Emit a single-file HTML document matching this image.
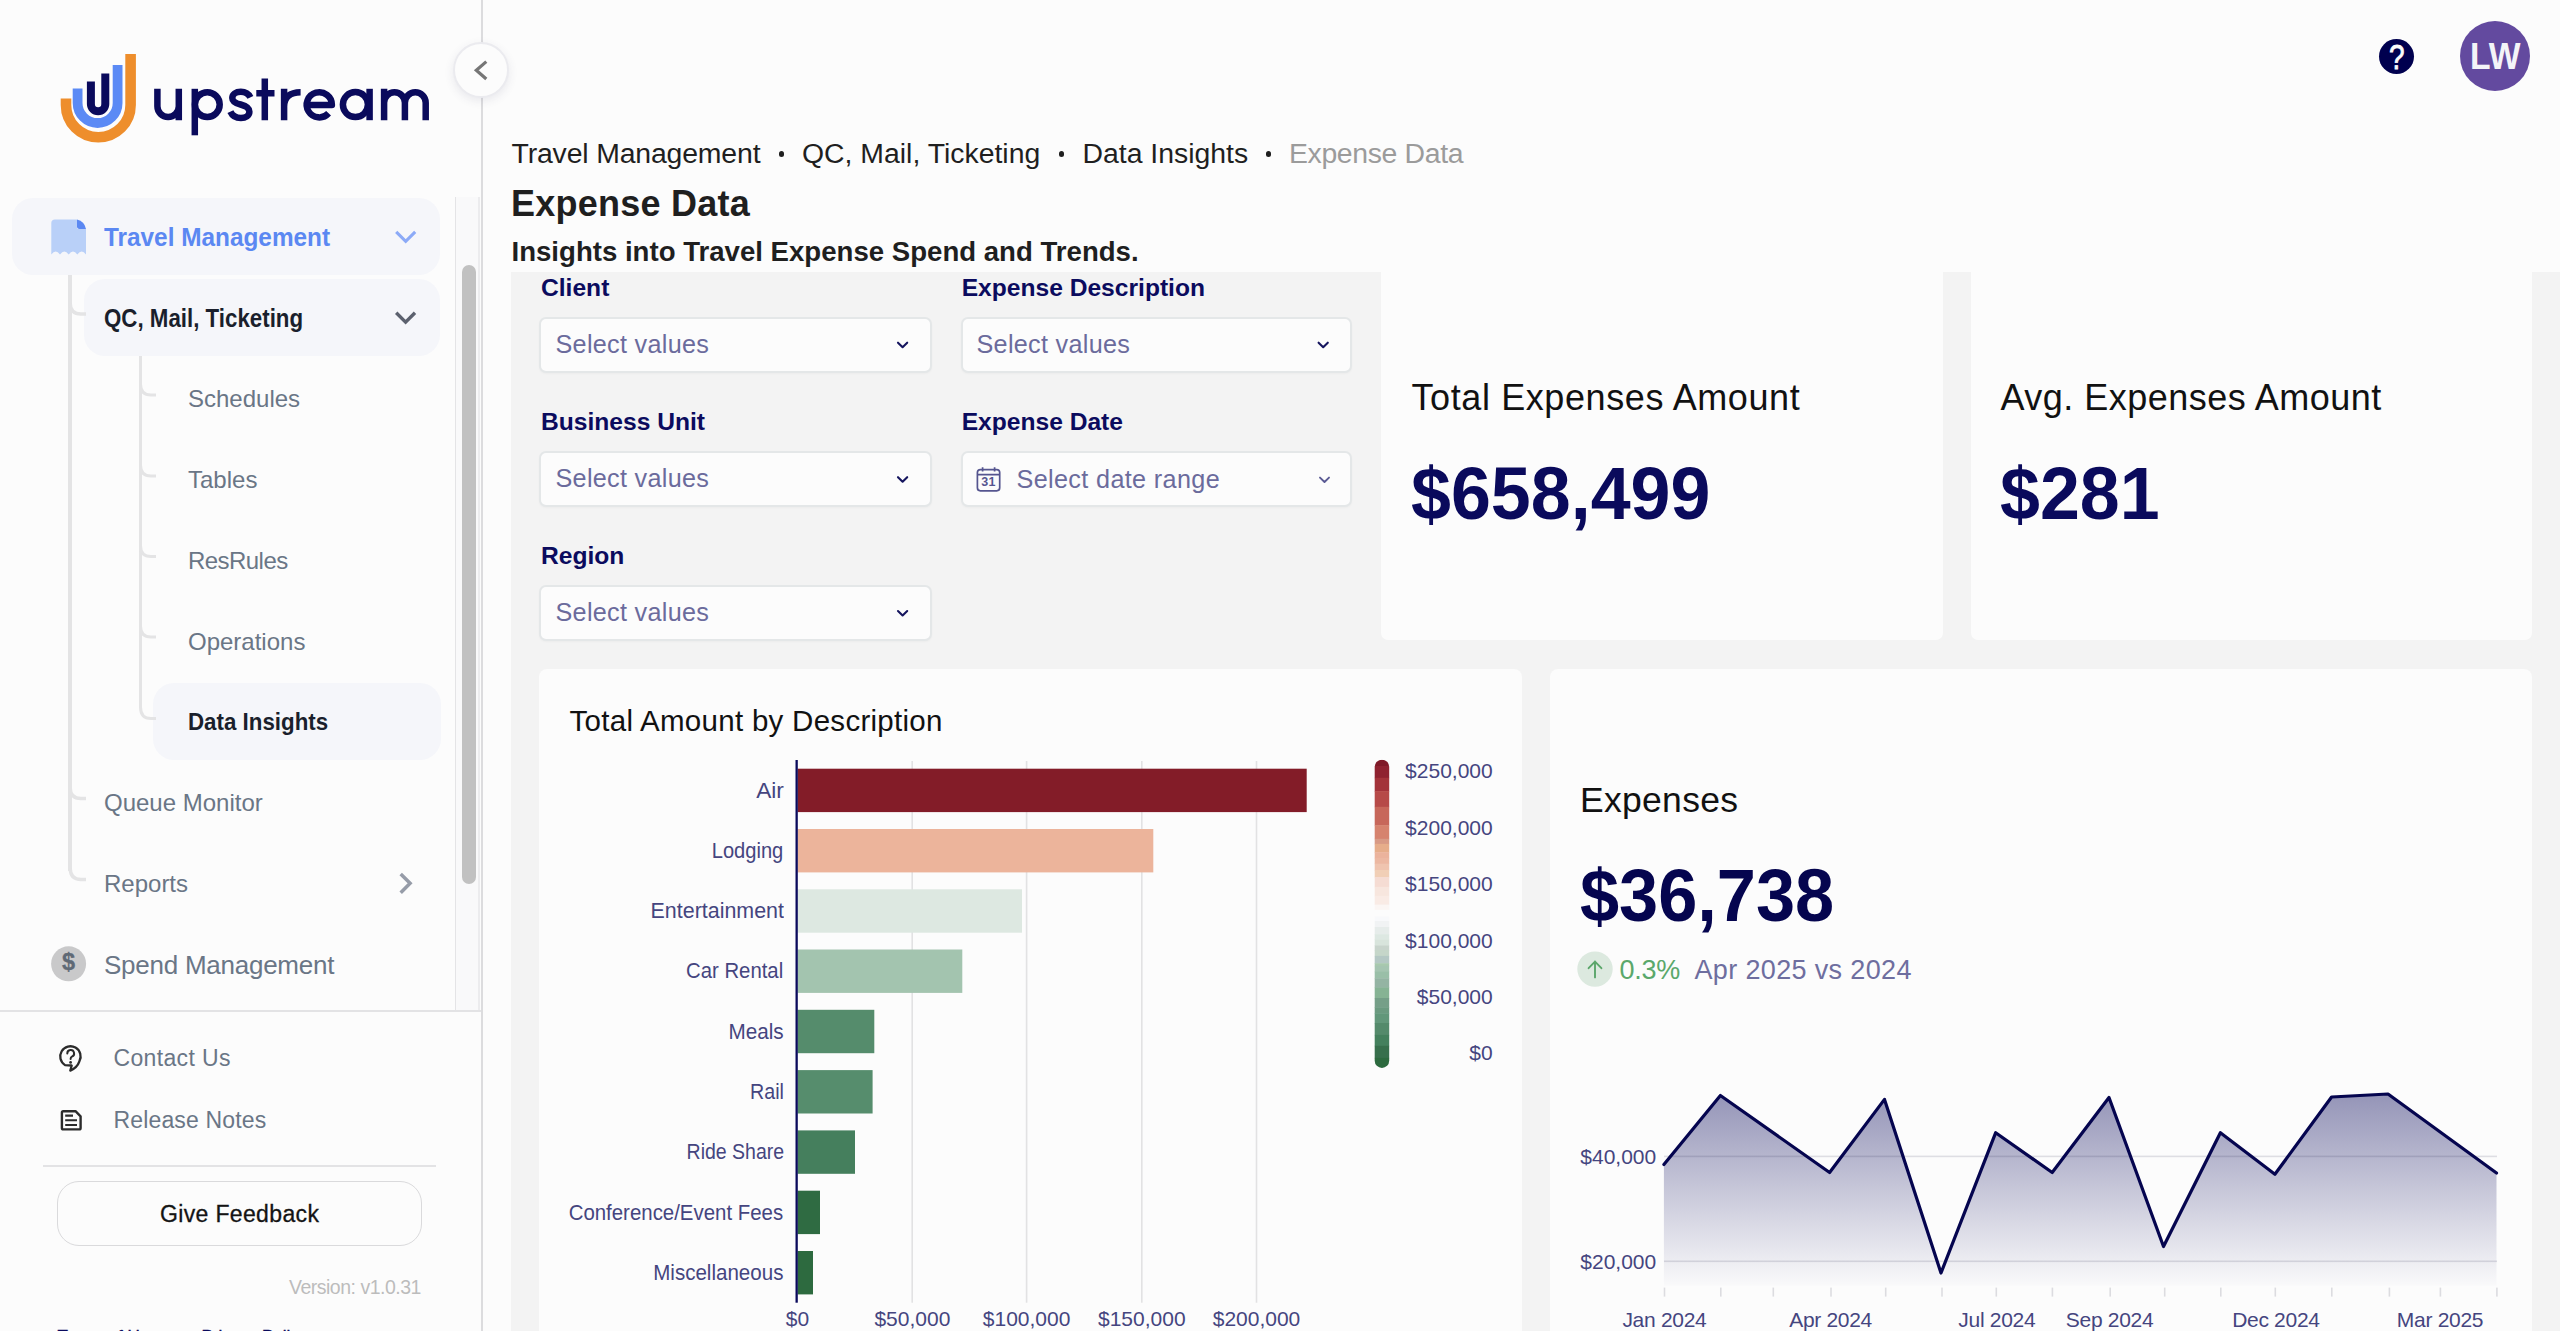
<!DOCTYPE html>
<html lang="en">
<head>
<meta charset="utf-8">
<title>Expense Data</title>
<style>
*{box-sizing:border-box;margin:0;padding:0}
html,body{width:2560px;height:1331px;overflow:hidden;background:#fcfcfc}
body{position:relative;font-family:"Liberation Sans",sans-serif;color:#111;-webkit-font-smoothing:antialiased}
.t{position:absolute;white-space:nowrap;line-height:1}
.abs{position:absolute}
.b{font-weight:bold}
/* sidebar */
#sidebar{position:absolute;left:0;top:0;width:483px;height:1331px;background:#fcfcfc;border-right:2px solid #dcdcde}
.pill{position:absolute;background:#f5f6fa;border-radius:21px}
.nav{color:#6a7686}
.navdark{color:#1a1f2c}
.tree{position:absolute;background:#e4e4e5}
/* main */
#panel{position:absolute;left:511px;top:272px;width:2049px;height:1059px;background:#f3f3f3}
.card{position:absolute;background:#fcfcfc}
.lbl{color:#0b0b5e;font-weight:bold;font-size:24.6px;letter-spacing:0}
.sel{position:absolute;height:56px;background:#fcfcfc;border:2px solid #e4e7e8;border-radius:7px;box-shadow:0 1px 2px rgba(0,0,0,.03)}
.ph{color:#6b6b9c;font-size:25.2px;letter-spacing:.3px}
.ax{color:#45457f;font-size:21px}
.bl{font-size:22px;transform-origin:100% 50%}
.axc{transform:translateX(-50%)}
.bc{top:138.9px;font-size:28.4px;color:#1f1f1f}
.bdot{top:151.3px;width:5.5px;height:5.5px;border-radius:50%;background:#1f1f1f}
</style>
</head>
<body>
<!-- SIDEBAR -->
<div id="sidebar">
<!-- logo -->
<svg id="logo" class="abs" style="left:50px;top:44px" width="100" height="110" viewBox="50 44 100 110" fill="none" stroke-linecap="butt">
  <path d="M66 98.5 V105 A32.3 32.3 0 0 0 130.6 105 V54" stroke="#ee8e2c" stroke-width="10.6"/>
  <path d="M77.6 88.5 V103 A20 20 0 0 0 117.6 103 V65" stroke="#5b8af5" stroke-width="9.8"/>
  <path d="M90.9 81.5 V104 A7.2 7.2 0 0 0 105.3 104 V73.5" stroke="#0a0a5c" stroke-width="8"/>
</svg>
<svg id="logotext" class="abs" style="left:145px;top:65px" width="300" height="80" viewBox="145 65 300 80" fill="none" stroke="#0a0a5c" stroke-width="6.5" stroke-linecap="butt" stroke-linejoin="round">
  <path d="M157.4 88.8 V106.3 A10.7 10.7 0 0 0 178.8 106.3 M178.8 88.8 V120.2"/>
  <path d="M194.8 88.8 V135.3"/><circle cx="207.3" cy="104.6" r="12.4"/>
  <path d="M250.4 97.4 C248.6 93.6 245 91.7 240.8 91.7 C235.6 91.7 232.3 94.4 232.3 97.9 C232.3 101.6 235.2 103.1 240.6 104.5 C246.6 106.1 249.4 107.9 249.4 111.7 C249.4 115.5 245.6 118 240.9 118 C236 118 232.3 115.8 230.4 111.6" stroke-linecap="butt"/>
  <path d="M264.8 78.5 V120.2 M256.3 93.2 H274.5"/>
  <path d="M284.1 88.8 V120.2 M284.1 106.5 C284.1 97.6 289.6 92.2 300.6 92.2"/>
  <path d="M306.7 104.9 H331.9 A12.6 12.6 0 1 0 328.6 113.3"/>
  <circle cx="355.4" cy="104.6" r="12.5"/><path d="M369.6 88.8 V120.2"/>
  <path d="M384.1 88.8 V120.2 M384.1 102.7 A10.4 10.4 0 0 1 404.9 102.7 V120.2 M404.9 102.7 A10.4 10.4 0 0 1 425.7 102.7 V120.2"/>
</svg>

<!-- scrollbar -->
<div class="abs" style="left:455px;top:197px;width:25px;height:813px;background:#f9f9fa;border-left:1.5px solid #e4e4e6;border-right:2px solid #ececee"></div>
<div id="thumb" class="abs" style="left:461.8px;top:265px;width:14px;height:619px;background:#c1c1c1;border-radius:7px"></div>

<!-- tree lines -->
<div class="tree" style="left:68.3px;top:275px;width:4px;height:596px"></div>
<div class="tree" style="left:139px;top:356px;width:3px;height:352px"></div>

<!-- pills -->
<div id="pill1" class="pill" style="left:12px;top:198.3px;width:428.4px;height:76.8px"></div>
<div id="pill2" class="pill" style="left:83.5px;top:279.4px;width:356.9px;height:76.6px"></div>
<div id="pill3" class="pill" style="left:153px;top:683.4px;width:287.5px;height:76.8px"></div>

<div id="tm" class="t b" style="left:104px;top:224px;font-size:26px;color:#5b88f2;transform-origin:0 0;transform:scaleX(.937)">Travel Management</div>
<div id="qc" class="t b navdark" style="left:104px;top:305.5px;font-size:25px;transform-origin:0 0;transform:scaleX(.892)">QC, Mail, Ticketing</div>
<div id="n1" class="t nav" style="left:188px;top:386.7px;font-size:24px">Schedules</div>
<div id="n2" class="t nav" style="left:188px;top:467.6px;font-size:24px">Tables</div>
<div id="n3" class="t nav" style="left:188px;top:548.5px;font-size:24px;letter-spacing:-.55px">ResRules</div>
<div id="n4" class="t nav" style="left:188px;top:629.7px;font-size:24px">Operations</div>
<div id="n5" class="t b navdark" style="left:188px;top:710px;font-size:24px;transform-origin:0 0;transform:scaleX(.93)">Data Insights</div>
<div id="n6" class="t nav" style="left:104px;top:790.5px;font-size:24px">Queue Monitor</div>
<div id="n7" class="t nav" style="left:104px;top:871.5px;font-size:24px">Reports</div>
<div id="n8" class="t nav" style="left:104px;top:952px;font-size:26px;letter-spacing:-.25px">Spend Management</div>

<!-- footer -->
<div class="abs" style="left:0;top:1010px;width:481px;height:2px;background:#e3e3e5"></div>
<div id="cu" class="t nav" style="left:113.5px;top:1046.5px;font-size:23px;letter-spacing:.35px">Contact Us</div>
<div id="rn" class="t nav" style="left:113.5px;top:1108.5px;font-size:23px;letter-spacing:.15px">Release Notes</div>
<div class="abs" style="left:43px;top:1165px;width:393px;height:2px;background:#e3e3e5"></div>
<div id="gf" class="abs" style="left:57px;top:1181px;width:365px;height:65px;border:1.5px solid #dadadc;border-radius:22px;background:#fcfcfc"></div>
<div id="gft" class="t" style="left:160px;top:1202.5px;font-size:23px;letter-spacing:.35px;color:#141414;-webkit-text-stroke:.3px #141414">Give Feedback</div>
<div id="ver" class="t" style="left:289px;top:1278px;font-size:19.5px;letter-spacing:-.5px;color:#bcbcbc">Version: v1.0.31</div>
<div id="terms" class="t" style="left:57.5px;top:1327.6px;font-size:17px;color:#0a0a5c;-webkit-text-stroke:.4px #0a0a5c">Terms of Use</div><div class="t" style="left:201.5px;top:1327.6px;font-size:17px;color:#0a0a5c;-webkit-text-stroke:.4px #0a0a5c">Privacy Policy</div>
</div>

<!-- sidebar icons -->
<svg class="abs" style="left:0;top:0;pointer-events:none" width="520" height="1331" viewBox="0 0 520 1331" fill="none">
  <!-- tree elbows level 1 -->
  <g stroke="#e4e4e5" stroke-width="3.4" fill="none">
    <path d="M70.2 303 Q70.2 314 81 314 H86"/>
    <path d="M70.2 787.5 Q70.2 798.5 81 798.5 H86"/>
    <path d="M70.2 868 Q70.2 879.5 81 879.5 H86"/>
  </g>
  <g stroke="#e4e4e5" stroke-width="3" fill="none">
    <path d="M140.5 384 Q140.5 395 151 395 H156"/>
    <path d="M140.5 465 Q140.5 476 151 476 H156"/>
    <path d="M140.5 545.5 Q140.5 556.5 151 556.5 H156"/>
    <path d="M140.5 626 Q140.5 637 151 637 H156"/>
    <path d="M140.5 707 Q140.5 718.5 151 718.5 H156"/>
  </g>
  <!-- receipt icon -->
  <path d="M55 219.5 H77 V229 H86 V254.5 Q83.8 251.6 81.7 251.6 Q79.5 251.6 77.3 254.5 Q75.2 251.6 73 251.6 Q70.8 251.6 68.7 254.5 Q66.5 251.6 64.3 251.6 Q62.2 251.6 60 254.5 Q57.8 251.6 55.7 251.6 Q53.5 251.6 51.3 254.5 V223 Q51.3 219.5 55 219.5 Z" fill="#b9d0f8"/>
  <path d="M77 219.5 Q84.5 221 86 229 H79.5 Q77 229 77 226.5 Z" fill="#5b88f2"/>
  <!-- chevrons -->
  <path d="M396.2 231.9 L405.7 241.4 L415.2 231.9" stroke="#8caaf7" stroke-width="3.1"/>
  <path d="M396.2 312.7 L405.6 322.1 L415 312.7" stroke="#5c616e" stroke-width="3.4"/>
  <path d="M400.7 873.9 L410.1 883.3 L400.7 892.7" stroke="#969ca8" stroke-width="3.5"/>
  <!-- spend $ -->
  <circle cx="68.6" cy="963.8" r="17.5" fill="#c9c9ca"/>
  <!-- contact icon -->
  <g stroke="#2b2b2b" stroke-width="2.3" stroke-linejoin="round" stroke-linecap="round">
    <path d="M65 1065.1 A10.2 10.2 0 1 1 79.4 1061.3 Q77.2 1067.6 70.3 1070.6 L71.7 1065.5 Z" fill="none"/>
    <path d="M67.3 1053.4 A3.4 3.4 0 1 1 71.9 1056.6 Q70.6 1057.2 70.6 1059" stroke-width="2"/>
  </g>
  <circle cx="70.6" cy="1062.4" r="1.4" fill="#2b2b2b"/>
  <!-- release notes icon -->
  <g stroke="#2b2b2b" stroke-width="2.4" stroke-linejoin="round" fill="none">
    <path d="M63.2 1111.2 H75.5 L80.6 1116.3 V1128 Q80.6 1129.4 79.2 1129.4 H63.2 Q61.9 1129.4 61.9 1128 V1112.5 Q61.9 1111.2 63.2 1111.2 Z"/>
    <path d="M65.2 1115.6 H73 M65.2 1120.3 H77 M65.2 1125 H77" stroke-width="2.1"/>
  </g>
</svg>
<div id="dol" class="t b" style="left:62.1px;top:951px;font-size:23.5px;color:#5f6975;-webkit-text-stroke:.3px #5f6975">$</div>
<!-- collapse button -->
<div id="collapse" class="abs" style="left:453px;top:42px;width:56px;height:56px;border-radius:50%;background:#fcfcfc;border:2px solid #ebebef;box-shadow:0 3px 10px rgba(60,60,100,.10)"></div>
<svg class="abs" style="left:466px;top:56px" width="30" height="30" viewBox="466 56 30 30" fill="none"><path d="M486.3 61.6 L476.3 70.3 L486.3 79" stroke="#767676" stroke-width="3.2"/></svg>
<!-- MAIN -->
<!-- top-right icons -->
<div id="help" class="abs" style="left:2379.1px;top:38.8px;width:35px;height:35px;border-radius:50%;background:#00004f"></div>
<div id="helpq" class="t" style="left:2387px;top:39.4px;font-size:35px;color:#fcfcfc;-webkit-text-stroke:.8px #fcfcfc;transform:scaleX(.8)">?</div>
<div id="avatar" class="abs" style="left:2460px;top:21.1px;width:70px;height:70px;border-radius:50%;background:#634a9f"></div>
<div id="avt" class="t b" style="left:2470.3px;top:38.5px;font-size:36px;color:#f4f4f8;transform-origin:0 0;transform:scaleX(.935)">LW</div>

<!-- breadcrumb -->
<div id="bc1" class="t bc" style="left:511.5px;letter-spacing:-.15px">Travel Management</div>
<div id="bc2" class="t bc" style="left:802px">QC, Mail, Ticketing</div>
<div id="bc3" class="t bc" style="left:1082.5px">Data Insights</div>
<div id="bc4" class="t bc" style="left:1289px;color:#9b9b9b;letter-spacing:-.35px">Expense Data</div>
<div class="abs bdot" style="left:778.5px"></div><div class="abs bdot" style="left:1058.5px"></div><div class="abs bdot" style="left:1265.5px"></div>
<div id="h1" class="t b" style="left:511px;top:185.5px;font-size:36px;color:#1f1f1f;letter-spacing:.25px">Expense Data</div>
<div id="h2" class="t b" style="left:511.5px;top:237.8px;font-size:27.6px;color:#1f1f1f">Insights into Travel Expense Spend and Trends.</div>

<div id="panel"></div>

<!-- filters -->
<div id="l1" class="t lbl" style="left:541px;top:275.8px">Client</div>
<div id="l2" class="t lbl" style="left:961.7px;top:275.8px">Expense Description</div>
<div id="l3" class="t lbl" style="left:541px;top:410.2px">Business Unit</div>
<div id="l4" class="t lbl" style="left:961.7px;top:410.2px">Expense Date</div>
<div id="l5" class="t lbl" style="left:541px;top:544.3px">Region</div>

<div id="s1" class="sel" style="left:539px;top:317px;width:393px"></div>
<div id="s2" class="sel" style="left:961px;top:317px;width:391px"></div>
<div id="s3" class="sel" style="left:539px;top:451px;width:393px"></div>
<div id="s4" class="sel" style="left:961px;top:451px;width:391px"></div>
<div id="s5" class="sel" style="left:539px;top:585px;width:393px"></div>

<div id="p1" class="t ph" style="left:555.5px;top:331.5px">Select values</div>
<div id="p2" class="t ph" style="left:976.5px;top:331.5px">Select values</div>
<div id="p3" class="t ph" style="left:555.5px;top:465.9px">Select values</div>
<div id="p4" class="t ph" style="left:1016.5px;top:466.7px;letter-spacing:.36px">Select date range</div>
<div id="p5" class="t ph" style="left:555.5px;top:599.6px">Select values</div>

<svg class="abs" style="left:511px;top:272px;pointer-events:none" width="900" height="400" viewBox="511 272 900 400" fill="none">
  <g stroke="#15155e" stroke-width="2.1" stroke-linecap="round" stroke-linejoin="round">
    <path d="M898 342.7 L902.6 347.2 L907.2 342.7"/>
    <path d="M1318.6 342.7 L1323.2 347.2 L1327.8 342.7"/>
    <path d="M898 477.2 L902.6 481.7 L907.2 477.2"/>
    <path d="M898 611 L902.6 615.5 L907.2 611"/>
  </g>
  <path d="M1320 477.6 L1324.5 482 L1329 477.6" stroke="#5a5a94" stroke-width="1.9" stroke-linecap="round" stroke-linejoin="round"/>
  <!-- calendar icon -->
  <g stroke="#55558f" stroke-width="1.7" fill="none" stroke-linejoin="round">
    <rect x="977.4" y="469.6" width="22.3" height="21.2" rx="3"/>
    <path d="M977.4 474.6 H999.7 M982.6 467.2 V471.6 M994.6 467.2 V471.6"/>
  </g>
</svg>
<div id="cal31" class="t b" style="left:981.2px;top:476.3px;font-size:12.5px;color:#55558f;letter-spacing:.3px">31</div>

<!-- KPI cards -->
<div id="k1" class="card" style="left:1381px;top:272px;width:562px;height:368px;border-radius:0 0 7px 7px"></div>
<div id="k2" class="card" style="left:1971px;top:272px;width:561px;height:368px;border-radius:0 0 7px 7px"></div>
<div id="k1t" class="t" style="left:1411.5px;top:380px;font-size:36px;color:#111;letter-spacing:.6px">Total Expenses Amount</div>
<div id="k1v" class="t b" style="left:1411px;top:456.5px;font-size:74px;color:#0a0a5c;transform-origin:0 0;transform:scaleX(.97)">$658,499</div>
<div id="k2t" class="t" style="left:2000.5px;top:380px;font-size:36px;color:#111;letter-spacing:.48px">Avg. Expenses Amount</div>
<div id="k2v" class="t b" style="left:2000px;top:456.5px;font-size:74px;color:#0a0a5c;transform-origin:0 0;transform:scaleX(.97)">$281</div>

<!-- chart cards -->
<div id="c1" class="card" style="left:539px;top:669px;width:983px;height:700px;border-radius:8px"></div>
<div id="c2" class="card" style="left:1549.5px;top:669px;width:982.5px;height:700px;border-radius:8px"></div>
<svg class="abs" style="left:539px;top:669px;pointer-events:none" width="2021" height="662" viewBox="539 669 2021 662" fill="none">
<defs>
<linearGradient id="lg" x1="0" y1="0" x2="0" y2="1"><stop offset="0" stop-color="#8a1f2c"/><stop offset="0.06" stop-color="#a3343b"/><stop offset="0.1" stop-color="#b84c49"/><stop offset="0.16" stop-color="#c9604f"/><stop offset="0.22" stop-color="#d47a5e"/><stop offset="0.27" stop-color="#df9d7b"/><stop offset="0.32" stop-color="#ecb39b"/><stop offset="0.37" stop-color="#f0c8af"/><stop offset="0.42" stop-color="#f6ddd3"/><stop offset="0.46" stop-color="#f9eeea"/><stop offset="0.49" stop-color="#fbfbfb"/><stop offset="0.53" stop-color="#eef2ef"/><stop offset="0.58" stop-color="#d8e4dc"/><stop offset="0.63" stop-color="#b9ccc1"/><stop offset="0.68" stop-color="#a5c3b0"/><stop offset="0.74" stop-color="#8fb39c"/><stop offset="0.78" stop-color="#7aa88a"/><stop offset="0.83" stop-color="#659878"/><stop offset="0.88" stop-color="#558c6c"/><stop offset="0.93" stop-color="#44805c"/><stop offset="0.97" stop-color="#336f48"/><stop offset="1" stop-color="#2c693e"/></linearGradient>
<linearGradient id="ag" gradientUnits="userSpaceOnUse" x1="0" y1="1093" x2="0" y2="1286"><stop offset="0" stop-color="#0a0a5c" stop-opacity=".43"/><stop offset="1" stop-color="#0a0a5c" stop-opacity=".01"/></linearGradient>
</defs>
<rect x="911.4000000000001" y="761" width="1.6" height="541.7" fill="#e2e2e3"/>
<rect x="1025.8" y="761" width="1.6" height="541.7" fill="#e2e2e3"/>
<rect x="1141.0" y="761" width="1.6" height="541.7" fill="#e2e2e3"/>
<rect x="1255.7" y="761" width="1.6" height="541.7" fill="#e2e2e3"/>
<rect x="797.6" y="768.7" width="509.1" height="43.4" fill="#831c28"/>
<rect x="797.6" y="829.0" width="355.7" height="43.4" fill="#ecb49b"/>
<rect x="797.6" y="889.3" width="224.4" height="43.4" fill="#dde8e1"/>
<rect x="797.6" y="949.5" width="164.7" height="43.4" fill="#a3c4af"/>
<rect x="797.6" y="1009.8" width="76.7" height="43.4" fill="#558c6c"/>
<rect x="797.6" y="1070.1" width="75.0" height="43.4" fill="#568d6d"/>
<rect x="797.6" y="1130.4" width="57.4" height="43.4" fill="#457f5d"/>
<rect x="797.6" y="1190.7" width="22.4" height="43.4" fill="#2f6b42"/>
<rect x="797.6" y="1251.0" width="15.4" height="43.4" fill="#2d6a3f"/>
<rect x="795.5" y="760" width="2.3" height="542.7" fill="#0a0a5c"/>
<clipPath id="lc"><rect x="1374.7" y="759.7" width="14.5" height="308.2" rx="7.2"/></clipPath><g clip-path="url(#lc)"><rect x="1374" y="759.7" width="16" height="6.7" fill="#7f1a28"/><rect x="1374" y="766" width="16" height="12.2" fill="#8f2230"/><rect x="1374" y="777.8" width="16" height="13.7" fill="#a3333a"/><rect x="1374" y="791.1" width="16" height="16.1" fill="#b64a48"/><rect x="1374" y="806.8" width="16" height="18.7" fill="#c7675a"/><rect x="1374" y="825.1" width="16" height="14.1" fill="#d6836e"/><rect x="1374" y="838.8" width="16" height="5.5" fill="#d89a85"/><rect x="1374" y="843.9" width="16" height="8.7" fill="#e6ad8a"/><rect x="1374" y="852.2" width="16" height="6.1" fill="#ebb39c"/><rect x="1374" y="857.9" width="16" height="6.2" fill="#ecb8a2"/><rect x="1374" y="863.7" width="16" height="6.7" fill="#efc4af"/><rect x="1374" y="870" width="16" height="7.4" fill="#f1cfb6"/><rect x="1374" y="877" width="16" height="10.3" fill="#f5dcd3"/><rect x="1374" y="886.9" width="16" height="9.3" fill="#f7e6de"/><rect x="1374" y="895.8" width="16" height="9.2" fill="#f9ebe5"/><rect x="1374" y="904.6" width="16" height="5.7" fill="#fbf6f4"/><rect x="1374" y="909.9" width="16" height="6.9" fill="#fcfcfc"/><rect x="1374" y="916.4" width="16" height="5.0" fill="#f8f9fb"/><rect x="1374" y="921" width="16" height="6.4" fill="#f1f3f4"/><rect x="1374" y="927" width="16" height="7.6" fill="#e6ecea"/><rect x="1374" y="934.2" width="16" height="5.7" fill="#dde8e2"/><rect x="1374" y="939.5" width="16" height="6.3" fill="#d8e4dc"/><rect x="1374" y="945.4" width="16" height="5.0" fill="#c8d4cc"/><rect x="1374" y="950" width="16" height="6.3" fill="#c5d6c9"/><rect x="1374" y="955.9" width="16" height="7.7" fill="#b4c8c4"/><rect x="1374" y="963.2" width="16" height="3.0" fill="#a8c9ae"/><rect x="1374" y="965.8" width="16" height="6.3" fill="#a5c5b1"/><rect x="1374" y="971.7" width="16" height="7.0" fill="#9abfa8"/><rect x="1374" y="978.3" width="16" height="9.6" fill="#94b4a3"/><rect x="1374" y="987.5" width="16" height="10.9" fill="#86b394"/><rect x="1374" y="998" width="16" height="9.6" fill="#759f88"/><rect x="1374" y="1007.2" width="16" height="6.4" fill="#6b9a80"/><rect x="1374" y="1013.2" width="16" height="10.2" fill="#62977a"/><rect x="1374" y="1023" width="16" height="12.3" fill="#548a6b"/><rect x="1374" y="1034.9" width="16" height="11.3" fill="#44805d"/><rect x="1374" y="1045.8" width="16" height="12.5" fill="#376f4c"/><rect x="1374" y="1057.9" width="16" height="10.4" fill="#2d6a3f"/></g>
<polygon points="1663.9,1285.7 1663.9,1164.5 1720.4,1095.5 1829.6,1172.5 1884.5,1099.4 1941,1273 1995.7,1132.7 2052.2,1172.5 2109,1097.5 2163.5,1246.5 2220.4,1132.7 2274.9,1174.3 2331.6,1097 2388,1094 2496.5,1173 2496.5,1285.7" fill="url(#ag)"/>
<rect x="1664" y="1155.6000000000001" width="833" height="1.6" fill="#1a1a3a" fill-opacity=".13"/>
<rect x="1664" y="1260.5" width="833" height="1.6" fill="#1a1a3a" fill-opacity=".13"/>
<polyline points="1663.9,1164.5 1720.4,1095.5 1829.6,1172.5 1884.5,1099.4 1941,1273 1995.7,1132.7 2052.2,1172.5 2109,1097.5 2163.5,1246.5 2220.4,1132.7 2274.9,1174.3 2331.6,1097 2388,1094 2496.5,1173" stroke="#05054f" stroke-width="3.2" stroke-linejoin="round" stroke-linecap="round" fill="none"/>
<rect x="1663.7" y="1287.6" width="1.6" height="9" fill="#dcdce0"/>
<rect x="1720.0" y="1287.6" width="1.6" height="9" fill="#dcdce0"/>
<rect x="1772.5" y="1287.6" width="1.6" height="9" fill="#dcdce0"/>
<rect x="1830.2" y="1287.6" width="1.6" height="9" fill="#dcdce0"/>
<rect x="1884.9" y="1287.6" width="1.6" height="9" fill="#dcdce0"/>
<rect x="1941.2" y="1287.6" width="1.6" height="9" fill="#dcdce0"/>
<rect x="1995.5" y="1287.6" width="1.6" height="9" fill="#dcdce0"/>
<rect x="2051.6" y="1287.6" width="1.6" height="9" fill="#dcdce0"/>
<rect x="2109.3999999999996" y="1287.6" width="1.6" height="9" fill="#dcdce0"/>
<rect x="2163.8999999999996" y="1287.6" width="1.6" height="9" fill="#dcdce0"/>
<rect x="2220.0" y="1287.6" width="1.6" height="9" fill="#dcdce0"/>
<rect x="2274.5" y="1287.6" width="1.6" height="9" fill="#dcdce0"/>
<rect x="2331.0" y="1287.6" width="1.6" height="9" fill="#dcdce0"/>
<rect x="2388.6" y="1287.6" width="1.6" height="9" fill="#dcdce0"/>
<rect x="2439.6" y="1287.6" width="1.6" height="9" fill="#dcdce0"/>
<rect x="2496.1" y="1287.6" width="1.6" height="9" fill="#dcdce0"/>
<circle cx="1595" cy="969.1" r="17.7" fill="#dce9df"/>
<path d="M1595 977.4 V961.4 M1588.6 968.2 L1595 961.6 L1601.4 968.2" stroke="#5aa66a" stroke-width="1.9" stroke-linecap="round" stroke-linejoin="round"/>
</svg>
<div id="c1t" class="t" style="left:569.5px;top:706.4px;font-size:29.5px;color:#111;letter-spacing:.28px">Total Amount by Description</div>
<div id="bl0" class="t ax bl" style="right:1776.4px;top:779.5px;transform:scaleX(1.030)">Air</div>
<div id="bl1" class="t ax bl" style="right:1776.4px;top:839.8px;transform:scaleX(0.914)">Lodging</div>
<div id="bl2" class="t ax bl" style="right:1776.4px;top:900.1px;transform:scaleX(0.974)">Entertainment</div>
<div id="bl3" class="t ax bl" style="right:1776.4px;top:960.3px;transform:scaleX(0.923)">Car Rental</div>
<div id="bl4" class="t ax bl" style="right:1776.4px;top:1020.6px;transform:scaleX(0.940)">Meals</div>
<div id="bl5" class="t ax bl" style="right:1776.4px;top:1080.9px;transform:scaleX(0.894)">Rail</div>
<div id="bl6" class="t ax bl" style="right:1776.4px;top:1141.2px;transform:scaleX(0.886)">Ride Share</div>
<div id="bl7" class="t ax bl" style="right:1776.4px;top:1201.5px;transform:scaleX(0.928)">Conference/Event Fees</div>
<div id="bl8" class="t ax bl" style="right:1776.4px;top:1261.8px;transform:scaleX(0.934)">Miscellaneous</div>
<div id="xl0" class="t ax axc" style="left:797.5px;top:1308.3px">$0</div>
<div id="xl1" class="t ax axc" style="left:912.4px;top:1308.3px">$50,000</div>
<div id="xl2" class="t ax axc" style="left:1026.6px;top:1308.3px">$100,000</div>
<div id="xl3" class="t ax axc" style="left:1141.8px;top:1308.3px">$150,000</div>
<div id="xl4" class="t ax axc" style="left:1256.5px;top:1308.3px">$200,000</div>
<div id="ll0" class="t ax" style="right:1067.3px;top:760.3px">$250,000</div>
<div id="ll1" class="t ax" style="right:1067.3px;top:816.8px">$200,000</div>
<div id="ll2" class="t ax" style="right:1067.3px;top:873.1px">$150,000</div>
<div id="ll3" class="t ax" style="right:1067.3px;top:929.5px">$100,000</div>
<div id="ll4" class="t ax" style="right:1067.3px;top:986.0px">$50,000</div>
<div id="ll5" class="t ax" style="right:1067.3px;top:1042.3px">$0</div>
<div id="c2t" class="t" style="left:1580px;top:782.8px;font-size:35.5px;color:#111;letter-spacing:.3px">Expenses</div>
<div id="c2v" class="t b" style="left:1579.5px;top:859.3px;font-size:74px;color:#05054f;transform-origin:0 0;transform:scaleX(.95)">$36,738</div>
<div id="c2p" class="t" style="left:1619.5px;top:956.5px;font-size:27px;color:#5aa86b;letter-spacing:-.3px">0.3%</div>
<div id="c2d" class="t" style="left:1694.5px;top:956.5px;font-size:27px;color:#6e6e9f;letter-spacing:.35px">Apr 2025 vs 2024</div>
<div id="yl0" class="t ax" style="left:1580.3px;top:1145.8px">$40,000</div>
<div id="yl1" class="t ax" style="left:1580.3px;top:1250.8px">$20,000</div>
<div id="ml0" class="t ax axc" style="left:1664.4px;top:1308.7px;letter-spacing:-.3px">Jan 2024</div>
<div id="ml1" class="t ax axc" style="left:1830.6px;top:1308.7px;letter-spacing:-.3px">Apr 2024</div>
<div id="ml2" class="t ax axc" style="left:1996.8px;top:1308.7px;letter-spacing:-.3px">Jul 2024</div>
<div id="ml3" class="t ax axc" style="left:2109.6px;top:1308.7px;letter-spacing:-.3px">Sep 2024</div>
<div id="ml4" class="t ax axc" style="left:2275.9px;top:1308.7px;letter-spacing:-.3px">Dec 2024</div>
<div id="ml5" class="t ax axc" style="left:2440px;top:1308.7px;letter-spacing:-.3px">Mar 2025</div>

</body>
</html>
